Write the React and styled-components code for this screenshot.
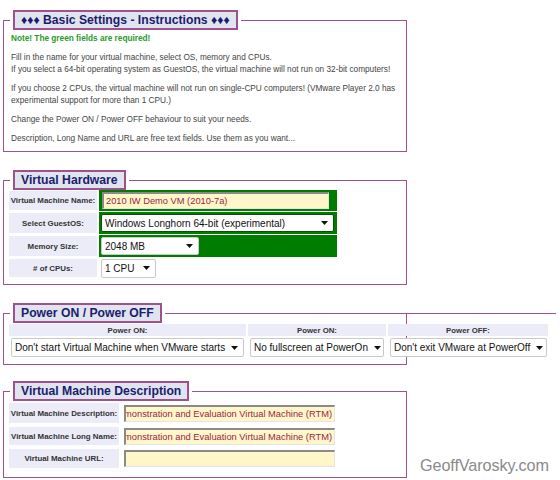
import React from "react";
import styled, { createGlobalStyle } from "styled-components";

const GlobalStyle = createGlobalStyle`
  html, body {
    margin: 0;
    padding: 0;
    background: #fff;
  }
`;

const PURPLE = "#a0508a";
const LAVENDER = "#ececf8";
const GREEN = "#007c00";

const Page = styled.div`
  position: relative;
  width: 560px;
  height: 480px;
  padding-left: 3px;
  padding-top: 1px;
  box-sizing: border-box;
  overflow: hidden;
  font-family: "Liberation Sans", Arial, sans-serif;
`;

const Panel = styled.div`
  position: relative;
  width: 404px;
  box-sizing: border-box;
  border: 1px solid ${PURPLE};
  margin-top: ${(p) => p.$mt}px;
  padding: 0 5px ${(p) => p.$pb}px;

  ${(p) =>
    p.$extend &&
    `
    &::after {
      content: "";
      position: absolute;
      top: -1px;
      left: 100%;
      width: 150px;
      border-top: 1px solid ${PURPLE};
    }
  `}
`;

const Legend = styled.div`
  display: flex;
  align-items: center;
  width: max-content;
  height: 20px;
  box-sizing: border-box;
  margin: -11px 0 0 4px;
  padding: 0 6px;
  background: #dfe4ef;
  border: 2px solid ${PURPLE};
  box-shadow: 0 0 0 3px #fff;
  color: #1c1c6e;
  font-weight: bold;
  font-size: 12.2px;
  white-space: nowrap;
`;

const Instructions = styled.div`
  padding: 3px 0 0 2px;
  font-size: 8.25px;
  line-height: 12px;
  color: #444;
`;

const Para = styled.p`
  margin: 0 0 7px;
  color: ${(p) => (p.$note ? "#2a9a2a" : "inherit")};
  font-weight: ${(p) => (p.$note ? "bold" : "normal")};
  &:last-child {
    margin-bottom: 0;
  }
`;

const FormGrid = styled.div`
  display: grid;
  grid-template-columns: ${(p) => p.$cols};
  grid-template-rows: ${(p) => p.$rows};
  column-gap: 2px;
  row-gap: ${(p) => p.$gap}px;
  margin-top: ${(p) => p.$mt}px;
  width: max-content;
`;

const Label = styled.div`
  display: flex;
  align-items: center;
  justify-content: center;
  margin: 1px 0;
  background: ${LAVENDER};
  color: #333;
  font-size: 7.9px;
  font-weight: bold;
  white-space: nowrap;
`;

const Cell = styled.div`
  display: flex;
  align-items: center;
  background: ${(p) => (p.$required ? GREEN : "transparent")};
  padding-left: 2px;
`;

const HeadCell = styled.div`
  display: flex;
  align-items: center;
  justify-content: center;
  background: ${LAVENDER};
  color: #333;
  font-size: 7.8px;
  font-weight: bold;
`;

const TextBox = styled.div`
  display: flex;
  align-items: center;
  justify-content: ${(p) => (p.$scrolled ? "flex-end" : "flex-start")};
  width: ${(p) => p.$w}px;
  height: ${(p) => p.$h}px;
  box-sizing: border-box;
  margin-left: 1px;
  padding: 0 2px;
  overflow: hidden;
  white-space: nowrap;
  background: #fff7c9;
  border: 1px solid #e4e4e4;
  border-top: 2px solid #8a8a8a;
  border-left: 2px solid #8a8a8a;
  color: #9a2448;
  font-size: 9.3px;
`;

const Select = styled.div`
  display: flex;
  align-items: center;
  justify-content: space-between;
  gap: 6px;
  width: ${(p) => p.$w}px;
  height: ${(p) => p.$h}px;
  box-sizing: border-box;
  padding: 0 5px 0 3px;
  background: #fff;
  border: 1px solid ${(p) => (p.$dark ? "#0b4f0b" : "#c9c9c9")};
  border-radius: 2px;
  color: #111;
  font-size: 10px;
  white-space: nowrap;
  overflow: hidden;
`;

const Watermark = styled.div`
  position: absolute;
  left: 420px;
  top: 456px;
  color: #8a8a8a;
  font-size: 16.2px;
  letter-spacing: -0.1px;
`;

const Arrow = () => (
  <svg width="7" height="4" viewBox="0 0 7 4" style={{ flexShrink: 0 }}>
    <path d="M0 0 H7 L3.5 4 Z" fill="#111" />
  </svg>
);

const Dropdown = ({ children, ...rest }) => (
  <Select {...rest}>
    <span>{children}</span>
    <Arrow />
  </Select>
);

const DESC = "Demonstration and Evaluation Virtual Machine (RTM)";

export default function App() {
  return (
    <Page>
      <GlobalStyle />

      <Panel $mt={19} $pb={6}>
        <Legend>♦♦♦ Basic Settings - Instructions ♦♦♦</Legend>
        <Instructions>
          <Para $note>Note! The green fields are required!</Para>
          <Para>
            Fill in the name for your virtual machine, select OS, memory and CPUs.
            <br />
            If you select a 64-bit operating system as GuestOS, the virtual machine will not run on 32-bit computers!
          </Para>
          <Para>
            If you choose 2 CPUs, the virtual machine will not run on single-CPU computers! (VMware Player 2.0 has
            <br />
            experimental support for more than 1 CPU.)
          </Para>
          <Para>Change the Power ON / Power OFF behaviour to suit your needs.</Para>
          <Para>Description, Long Name and URL are free text fields. Use them as you want...</Para>
        </Instructions>
      </Panel>

      <Panel $mt={28} $pb={6}>
        <Legend>Virtual Hardware</Legend>
        <FormGrid $cols="88px 238px" $rows="21px 22px 22px 20px" $gap={1} $mt={0}>
          <Label>Virtual Machine Name:</Label>
          <Cell $required>
            <TextBox $w={227} $h={17}>2010 IW Demo VM (2010-7a)</TextBox>
          </Cell>
          <Label>Select GuestOS:</Label>
          <Cell $required>
            <Dropdown $w={233} $h={18} $dark>
              Windows Longhorn 64-bit (experimental)
            </Dropdown>
          </Cell>
          <Label>Memory Size:</Label>
          <Cell $required>
            <Dropdown $w={98} $h={18}>2048 MB</Dropdown>
          </Cell>
          <Label>
            # of CPUs:
          </Label>
          <Cell>
            <Dropdown $w={55} $h={19}>1 CPU</Dropdown>
          </Cell>
        </FormGrid>
      </Panel>

      <Panel $mt={28} $pb={7} $extend>
        <Legend>Power ON / Power OFF</Legend>
        <FormGrid $cols="237px 138px 160px" $rows="12px 19px" $gap={2} $mt={1}>
          <HeadCell>Power ON:</HeadCell>
          <HeadCell>Power ON:</HeadCell>
          <HeadCell>Power OFF:</HeadCell>
          <Cell>
            <Dropdown $w={233} $h={19}>Don't start Virtual Machine when VMware starts</Dropdown>
          </Cell>
          <Cell>
            <Dropdown $w={134} $h={19}>No fullscreen at PowerOn</Dropdown>
          </Cell>
          <Cell>
            <Dropdown $w={157} $h={19}>Don't exit VMware at PowerOff</Dropdown>
          </Cell>
        </FormGrid>
      </Panel>

      <Panel $mt={26} $pb={8}>
        <Legend>Virtual Machine Description</Legend>
        <FormGrid $cols="110px 214px" $rows="22px 20px 21px" $gap={2} $mt={1}>
          <Label>Virtual Machine Description:</Label>
          <Cell>
            <TextBox $w={211} $h={17} $scrolled>{DESC}</TextBox>
          </Cell>
          <Label>Virtual Machine Long Name:</Label>
          <Cell>
            <TextBox $w={211} $h={17} $scrolled>{DESC}</TextBox>
          </Cell>
          <Label>Virtual Machine URL:</Label>
          <Cell>
            <TextBox $w={211} $h={17} />
          </Cell>
        </FormGrid>
      </Panel>

      <Watermark>GeoffVarosky.com</Watermark>
    </Page>
  );
}
